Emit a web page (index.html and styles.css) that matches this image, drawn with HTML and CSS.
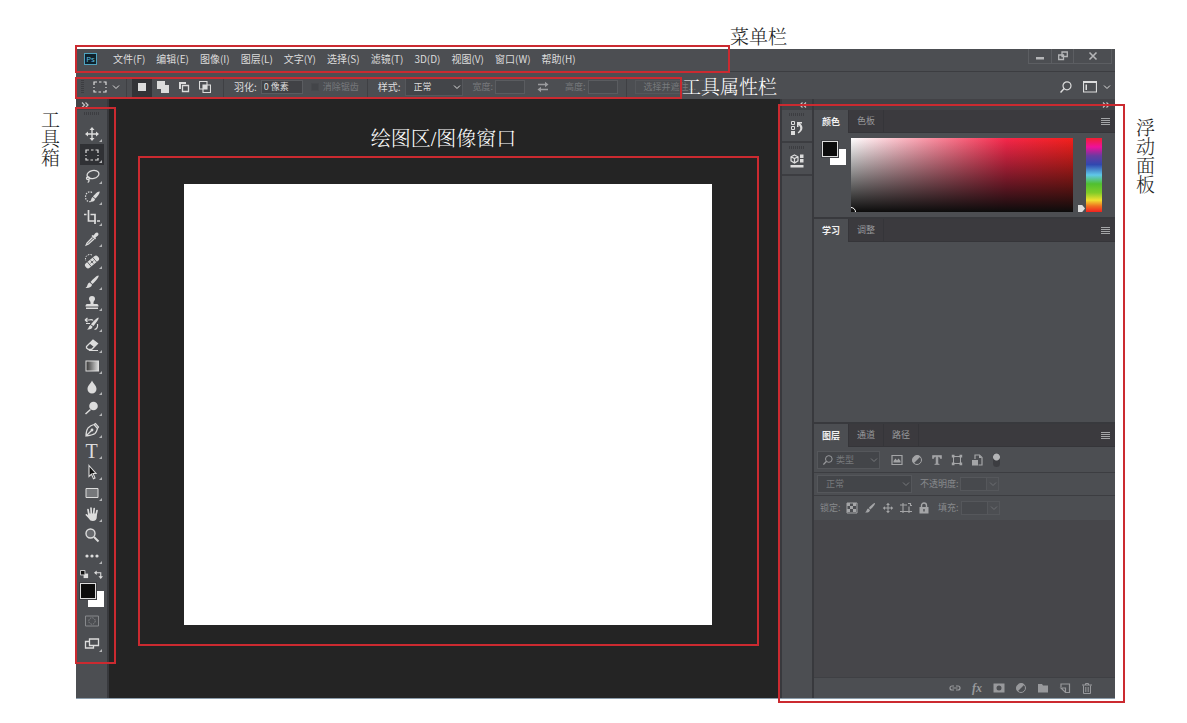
FILE: index.html
```html
<!DOCTYPE html>
<html lang="zh-CN">

<head>
  <meta charset="UTF-8">
  <meta name="viewport" content="width=device-width, initial-scale=1.0">
  <title>Photoshop 工作界面</title>
  <link rel="stylesheet" href="styles.css">
</head>

<body>
  <svg class="defs" aria-hidden="true">
    <symbol id="marquee" viewBox="0 0 16 16"><path d="M2 6V3h3M7 3h2.500M11.500 3H14v3M14 8v1M14 11v2h-3M9 13H6.500M4.500 13H2v-2M2 9V8" fill="none" stroke="currentColor" stroke-width="1.200" /></symbol>
    <symbol id="move" viewBox="0 0 16 16"><path d="M8 3v10M3 8h10" stroke="currentColor" stroke-width="1.400" /><path d="M8 1l2.500 3h-5zM8 15l2.500-3h-5zM1 8l3-2.500v5zM15 8l-3-2.500v5z" fill="currentColor" /></symbol>
    <symbol id="lasso" viewBox="0 0 16 16"><g fill="none" stroke="currentColor" stroke-width="1.300"><ellipse cx="9" cy="6.500" rx="6" ry="4" transform="rotate(-12 9 6.500)" /><path d="M4 9c-2 0-2 2.500 0 2.500S6 9 4 9M4.500 11.500c1 1 .5 2.500-.8 3" /></g></symbol>
    <symbol id="quick" viewBox="0 0 16 16"><path d="M8 3.500C5 1.500 1.500 4 1.500 8S5 13.500 7.500 12" fill="none" stroke="currentColor" stroke-width="1.200" stroke-dasharray="1.500 1.200" /><path d="M15.500 2.500c1 1-2 5-4 7L9 7.500c1.500-2 5-5.500 6.500-5zM8.500 8l2.500 2c0 2-2 3-5 2.500 1.500-1 1-3.500 2.500-4.500z" fill="currentColor" /></symbol>
    <symbol id="crop" viewBox="0 0 16 16"><path d="M4.500 0v11H12M0 4.500h2.500M6.500 4.500H11V14M13 11h3" fill="none" stroke="currentColor" stroke-width="1.700" /></symbol>
    <symbol id="dropper" viewBox="0 0 16 16"><path d="M9.500 4.500l2-2.500c2-1.500 4 .5 2.500 2.500l-2.500 2 .5 1-1 1L7.500 5l1-1z" fill="currentColor" /><path d="M8.500 6.500L3 12l-.8 2L4.500 13 10 8" fill="none" stroke="currentColor" stroke-width="1.300" /></symbol>
    <symbol id="heal" viewBox="0 0 16 16"><path d="M8 2C4 0 0 4 2 8" fill="none" stroke="currentColor" stroke-dasharray="1.500 1.200" /><g transform="rotate(-40 8 9)"><rect x="0" y="6" width="16" height="6" rx="2.500" fill="currentColor" /><path d="M4.500 6v6M11.500 6v6M6 9h4M8 7v4" stroke="#4c4e52" stroke-width=".8" /></g></symbol>
    <symbol id="brush" viewBox="0 0 16 16"><path d="M14.500 1.500c1 1-3 6-6 8.500L6.500 8C9 5 13.500 1 14.500 1.500zM5.500 8.500L8 10.500c0 2.500-3 4-6.500 3.500C4 12.500 3 9.500 5.500 8.500z" fill="currentColor" /></symbol>
    <symbol id="stamp" viewBox="0 0 16 16"><path d="M6.500 7.500C6.500 6 5 5.500 5 4a3 3 0 016 0c0 1.500-1.500 2-1.500 3.500V9H13c1 0 1.500 1 1.500 2.500h-13C1.500 10 2 9 3 9h3.500zM2 12.500h12V14H2z" fill="currentColor" /></symbol>
    <symbol id="history" viewBox="0 0 16 16"><path d="M14.500 1.500c1 1-3 6-5 8.500L7 8.500c2-3 6-7 7.500-7zM6.500 9l2 1.500c0 2-2.500 3.500-5.500 3 2-1 1.500-3.500 3.500-4.500z" fill="currentColor" /><path d="M1 4h4M1 4l2.500-2M1 4l2.500 2M5 4c3-1 4 .5 4 .5M2 7.500h4M13.500 8c.5 3-1 5-3 5.500" fill="none" stroke="currentColor" stroke-width="1.200" /></symbol>
    <symbol id="eraser" viewBox="0 0 16 16"><path d="M2.500 9.500L9 3l4.500 3.500L7.500 12.500H4.500L2.500 11z" fill="none" stroke="currentColor" stroke-width="1.300" /><path d="M5.500 6.500L9 3l4.500 3.500L10 10zM5 13h9v1H5z" fill="currentColor" /></symbol>
    <symbol id="gradient" viewBox="0 0 16 16"><linearGradient id="gr"><stop stop-color="#333" /><stop offset="1" stop-color="#ddd" /></linearGradient><rect x="2" y="3" width="12.500" height="10" fill="url(#gr)" stroke="currentColor" /></symbol>
    <symbol id="drop" viewBox="0 0 16 16"><path d="M8 1.500c1 3 4.500 5 4.500 8.500a4.500 4.500 0 01-9 0C3.500 6.500 7 4.500 8 1.500z" fill="currentColor" /></symbol>
    <symbol id="dodge" viewBox="0 0 16 16"><circle cx="9.500" cy="6" r="4.300" fill="currentColor" /><path d="M6.500 9.500L1.500 14" stroke="currentColor" stroke-width="1.500" /></symbol>
    <symbol id="pen" viewBox="0 0 16 16"><path d="M2 14c0-3 .5-6 2-8 2-2 4-3 6-3.500l3.500 4C13 8.500 12.500 10 11 11.500 9 13 5 13.500 2 14zM10 2.500l1.500-1 3 3.500-1 1.500M2 14l5.500-5.500" fill="none" stroke="currentColor" stroke-width="1.200" /><circle cx="8" cy="8" r="1.400" fill="currentColor" /></symbol>
    <symbol id="pointer" viewBox="0 0 16 16"><path d="M5 1.500l7 8H9l2 4.500-1.500.7-2-4.500L5 12.500z" fill="#111" stroke="currentColor" stroke-width="1.100" /></symbol>
    <symbol id="rect" viewBox="0 0 16 16"><path d="M2 3.500h12v9H2z" fill="#76787b" stroke="currentColor" /></symbol>
    <symbol id="hand" viewBox="0 0 16 16"><path d="M5 9L4 3.500M7.300 8L7 2M9.600 8l.6-5.500M12 9l1-4.500" stroke="currentColor" stroke-width="1.700" stroke-linecap="round" /><path d="M4.200 7.500h8.600V11c0 2.500-1.500 4-4 4-2 0-3-.8-4-2.500L1.500 9c0-1.500 1.500-1.500 2.700.5z" fill="currentColor" /></symbol>
    <symbol id="zoom" viewBox="0 0 16 16"><circle cx="6.500" cy="6.500" r="4.500" fill="#686a6e" stroke="currentColor" stroke-width="1.400" /><path d="M10 10l4.500 4.500" stroke="currentColor" stroke-width="2" /></symbol>
    <symbol id="more" viewBox="0 0 16 16"><circle cx="3" cy="8" r="1.600" fill="currentColor" /><circle cx="8" cy="8" r="1.600" fill="currentColor" /><circle cx="13" cy="8" r="1.600" fill="currentColor" /></symbol>
    <symbol id="mask" viewBox="0 0 16 16"><path d="M1.500 3h13v10h-13z" fill="none" stroke="currentColor" /><circle cx="8" cy="8" r="3.200" fill="none" stroke="currentColor" stroke-dasharray="1.500 1" /></symbol>
    <symbol id="screen" viewBox="0 0 16 16"><path d="M1.500 5.500h8v6.500h-8z" fill="none" stroke="currentColor" stroke-width="1.300" /><path d="M5.500 3h9v6.500h-9z" fill="#4c4e52" stroke="currentColor" stroke-width="1.300" /></symbol>
    <symbol id="minidefault" viewBox="0 0 10 10"><path d="M4 4h5v5H4z" fill="#ddd" /><path d="M.5 .5h5v5h-5z" fill="#111" stroke="#ddd" /></symbol>
    <symbol id="miniswap" viewBox="0 0 10 10"><path d="M2 3h5.500v5" fill="none" stroke="currentColor" stroke-width="1.200" /><path d="M0 3l3-2.500v5zM7.500 10L5 7h5z" fill="currentColor" /></symbol>
    <symbol id="typet" viewBox="0 0 16 16"><path d="M2 2h12v4h-1.500c-.2-1.500-.8-2.500-2.500-2.500H9.200v9c0 .7.600.9 1.800 1V14H5v-.5c1.200-.1 1.800-.3 1.800-1v-9H6C4.300 3.500 3.700 4.500 3.500 6H2z" fill="currentColor" stroke="currentColor" stroke-width=".8" /></symbol>
    <symbol id="selnew" viewBox="0 0 12 12"><path d="M2 2h8v8H2z" fill="currentColor" /></symbol>
    <symbol id="seladd" viewBox="0 0 12 12"><path d="M0 0h8v4h4v8H4V8H0z" fill="currentColor" /></symbol>
    <symbol id="selsub" viewBox="0 0 12 12"><path d="M1 1h7v2H3v5H1z" fill="currentColor" /><path d="M4.500 4.500h6v6h-6z" fill="none" stroke="currentColor" stroke-width="1.300" /></symbol>
    <symbol id="selint" viewBox="0 0 12 12"><path d="M.5 .5h7.500v7.500H.5zM4 4h7.500v7.500H4z" fill="none" stroke="currentColor" stroke-width="1.100" /><path d="M4 4h4v4H4z" fill="currentColor" /></symbol>
    <symbol id="chev" viewBox="0 0 8 8"><path d="M1 2.500l3 3 3-3" fill="none" stroke="currentColor" /></symbol>
    <symbol id="more-right" viewBox="0 0 8 6"><path d="M1 .5L3.500 3 1 5.500M4.500 .5L7 3 4.500 5.500" fill="none" stroke="currentColor" stroke-width="1.200" /></symbol>
    <symbol id="more-left" viewBox="0 0 8 6"><path d="M3.500 .5L1 3l2.500 2.500M7 .5L4.500 3 7 5.500" fill="none" stroke="currentColor" stroke-width="1.200" /></symbol>
    <symbol id="swap" viewBox="0 0 12 12"><path d="M1 3.500h8M11 8.500H3" stroke="currentColor" stroke-width="1.300" /><path d="M8 .8l3.500 2.700L8 6.200zM4 5.800L.5 8.500 4 11.200z" fill="currentColor" /></symbol>
    <symbol id="search" viewBox="0 0 12 12"><circle cx="7" cy="4.800" r="4" fill="none" stroke="currentColor" stroke-width="1.200" /><path d="M4.200 7.500L.5 11.500" stroke="currentColor" stroke-width="1.500" /></symbol>
    <symbol id="layout" viewBox="0 0 14 12"><path d="M.5 1h13v10H.5z" fill="none" stroke="currentColor" stroke-width="1.200" /><path d="M0 0h14v2H0zM2.500 3.500H4V9H2.500z" fill="currentColor" /></symbol>
    <symbol id="wmin" viewBox="0 0 10 10"><path d="M1 6h8v2.500H1z" fill="currentColor" /></symbol>
    <symbol id="wmax" viewBox="0 0 10 10"><path d="M4 1h5.300v4.500H4zM.7 4h4.800v4.500H.7z" fill="#4c4e52" stroke="currentColor" stroke-width="1.300" /></symbol>
    <symbol id="wclose" viewBox="0 0 10 10"><path d="M1.500 1.500l7 7M8.500 1.500l-7 7" stroke="currentColor" stroke-width="1.600" /></symbol>
    <symbol id="steps" viewBox="0 0 14 14"><path d="M1.500 .5h3v3h-3zM1.500 5.500h3v3h-3z" fill="none" stroke="currentColor" /><path d="M1 10h4v4H1zM7 1h5v1.500h-2C13.500 5 13.500 9.500 8.500 12.500l-.8-1.200C11 9 11 6 8.500 4v2H7z" fill="currentColor" /></symbol>
    <symbol id="props" viewBox="0 0 14 14"><path d="M4.500 1L8 2.800v4L4.500 9 1 6.800v-4zM1 2.800l3.500 1.700L8 2.800M4.500 4.500V9" fill="none" stroke="currentColor" stroke-width="1.200" /><path d="M10 .5h3.500V4H10zM10 5h3.500v3.500H10zM.5 11h13v2.500H.5z" fill="currentColor" /></symbol>
    <symbol id="image" viewBox="0 0 12 12"><path d="M1 1.500h10v9H1z" fill="none" stroke="currentColor" stroke-width="1.200" /><path d="M2.500 8.500V7L4.500 4.500 6 6.500l1.500-2 2 2.500v1.500z" fill="currentColor" /></symbol>
    <symbol id="adjust" viewBox="0 0 12 12"><circle cx="6" cy="6" r="4.500" fill="none" stroke="currentColor" /><path d="M2.500 9.500l7-7A5 5 0 002.500 9.500z" fill="currentColor" /></symbol>
    <symbol id="shape" viewBox="0 0 12 12"><path d="M2.500 2.500h7v7h-7z" fill="none" stroke="currentColor" /><path d="M.8 .8h2.700v2.700H.8zM8.500 .8h2.700v2.700H8.500zM.8 8.500h2.700v2.700H.8zM8.500 8.500h2.700v2.700H8.500z" fill="currentColor" /></symbol>
    <symbol id="smart" viewBox="0 0 12 12"><path d="M4 5V1h4.500L11 3.500V11H7.500" fill="none" stroke="currentColor" stroke-width="1.200" /><path d="M1 6h6v5.500H1zM8 1v3h3z" fill="currentColor" /></symbol>
    <symbol id="checker" viewBox="0 0 12 12"><path d="M1 1h10v10H1z" fill="none" stroke="currentColor" /><path d="M1 1h3v3H1zM7 1h3v3H7zM4 4h3v3H4zM1 7h3v3H1zM7 7h3v3H7z" fill="currentColor" /></symbol>
    <symbol id="artboard" viewBox="0 0 12 12"><path d="M3 1v10M9 4.500V11M0 3h7M0 9.500h12M10.500 1v2.500H12M8 1.500h3" fill="none" stroke="currentColor" stroke-width="1.100" /></symbol>
    <symbol id="lock" viewBox="0 0 12 12"><path d="M3.500 5.500v-2a2.500 2.500 0 015 0v2" fill="none" stroke="currentColor" stroke-width="1.400" /><path d="M1.500 5h9v6.500h-9zM5.300 7v2.500h1.400V7z" fill="currentColor" fill-rule="evenodd" /></symbol>
    <symbol id="link" viewBox="0 0 12 12"><path d="M5 4H3a2 2 0 000 4h2M7 4h2a2 2 0 010 4H7M3.500 6h5" fill="none" stroke="currentColor" stroke-width="1.200" /></symbol>
    <symbol id="addmask" viewBox="0 0 12 12"><path d="M.5 1.500h11v9H.5zM6 3.500a2.500 2.500 0 100 5 2.500 2.500 0 000-5z" fill="currentColor" fill-rule="evenodd" /></symbol>
    <symbol id="folder" viewBox="0 0 12 12"><path d="M1 2h4l1 1.500h5V10.500H1z" fill="currentColor" /></symbol>
    <symbol id="newlayer" viewBox="0 0 12 12"><path d="M2 5V2h8.500v8.500H6.500L2 6h4.500v4.500" fill="none" stroke="currentColor" stroke-width="1.200" /></symbol>
    <symbol id="trash" viewBox="0 0 12 12"><path d="M1 3h10M4.500 3V1.500h3V3M2.500 3.500v8h7v-8M4.800 5v5M7.200 5v5" fill="none" stroke="currentColor" /></symbol>
  </svg>

  <div class="page">
    <div class="caption caption-menu">菜单栏</div>
    <div class="caption caption-tools">工具箱</div>
    <div class="caption caption-panels">浮动面板</div>

    <div class="app">
      <header class="menubar">
        <span class="logo">Ps</span>
        <nav class="menu">
          <a href="#">文件(F)</a>
          <a href="#">编辑(E)</a>
          <a href="#">图像(I)</a>
          <a href="#">图层(L)</a>
          <a href="#">文字(Y)</a>
          <a href="#">选择(S)</a>
          <a href="#">滤镜(T)</a>
          <a href="#">3D(D)</a>
          <a href="#">视图(V)</a>
          <a href="#">窗口(W)</a>
          <a href="#">帮助(H)</a>
        </nav>
        <div class="window-btns">
          <button type="button" aria-label="最小化"><svg><use href="#wmin" /></svg></button>
          <button type="button" aria-label="还原"><svg><use href="#wmax" /></svg></button>
          <button type="button" aria-label="关闭" class="close"><svg><use href="#wclose" /></svg></button>
        </div>
        <span class="mark mark-menu"></span>
      </header>

      <div class="options">
        <span class="grip-v"></span>
        <button type="button" class="preset" aria-label="矩形选框"><svg class="i16"><use href="#marquee" /></svg><svg class="i8"><use href="#chev" /></svg></button>
        <div class="modes">
          <button type="button" class="active" aria-label="新选区"><svg class="i12"><use href="#selnew" /></svg></button>
          <button type="button" aria-label="添加到选区"><svg class="i12"><use href="#seladd" /></svg></button>
          <button type="button" aria-label="从选区减去"><svg class="i12"><use href="#selsub" /></svg></button>
          <button type="button" aria-label="与选区交叉"><svg class="i12"><use href="#selint" /></svg></button>
        </div>
        <div class="group">
          <label for="feather">羽化:</label>
          <input id="feather" class="field wide" value="0 像素">
          <input id="alias" type="checkbox" disabled>
          <label for="alias" class="dim">消除锯齿</label>
        </div>
        <div class="group">
          <label for="style">样式:</label>
          <span class="select style-select"><select id="style"><option>正常</option></select><svg class="i8"><use href="#chev" /></svg></span>
          <label for="width" class="dim">宽度:</label>
          <input id="width" class="field" disabled>
          <button type="button" class="swap" aria-label="互换"><svg class="i12"><use href="#swap" /></svg></button>
          <label for="height" class="dim">高度:</label>
          <input id="height" class="field" disabled>
        </div>
        <button type="button" class="refine" disabled>选择并遮住...</button>
        <div class="options-right">
          <button type="button" aria-label="搜索"><svg class="i12"><use href="#search" /></svg></button>
          <button type="button" class="workspace-btn" aria-label="工作区"><svg class="i14"><use href="#layout" /></svg><svg class="i8"><use href="#chev" /></svg></button>
        </div>
        <span class="mark mark-options"></span>
        <span class="caption caption-options">工具属性栏</span>
      </div>

      <div class="workspace">
        <aside class="toolbox">
          <div class="strip"><svg><use href="#more-right" /></svg></div>
          <span class="grip"></span>
          <div class="tools">
            <button type="button" aria-label="移动"><svg><use href="#move" /></svg></button>
            <button type="button" class="active" aria-label="矩形选框"><svg><use href="#marquee" /></svg></button>
            <button type="button" aria-label="套索"><svg><use href="#lasso" /></svg></button>
            <button type="button" aria-label="快速选择"><svg><use href="#quick" /></svg></button>
            <button type="button" aria-label="裁剪"><svg><use href="#crop" /></svg></button>
            <button type="button" aria-label="吸管"><svg><use href="#dropper" /></svg></button>
          </div>
          <div class="tools">
            <button type="button" aria-label="修复画笔"><svg><use href="#heal" /></svg></button>
            <button type="button" aria-label="画笔"><svg><use href="#brush" /></svg></button>
            <button type="button" aria-label="仿制图章"><svg><use href="#stamp" /></svg></button>
            <button type="button" aria-label="历史记录画笔"><svg><use href="#history" /></svg></button>
            <button type="button" aria-label="橡皮擦"><svg><use href="#eraser" /></svg></button>
            <button type="button" aria-label="渐变"><svg><use href="#gradient" /></svg></button>
            <button type="button" aria-label="模糊"><svg><use href="#drop" /></svg></button>
            <button type="button" aria-label="减淡"><svg><use href="#dodge" /></svg></button>
          </div>
          <div class="tools">
            <button type="button" aria-label="钢笔"><svg><use href="#pen" /></svg></button>
            <button type="button" aria-label="文字" class="type">T</button>
            <button type="button" aria-label="路径选择"><svg><use href="#pointer" /></svg></button>
            <button type="button" aria-label="矩形"><svg><use href="#rect" /></svg></button>
            <button type="button" aria-label="抓手"><svg><use href="#hand" /></svg></button>
            <button type="button" aria-label="缩放" class="single"><svg><use href="#zoom" /></svg></button>
            <button type="button" aria-label="编辑工具栏"><svg><use href="#more" /></svg></button>
          </div>
          <div class="minis">
            <button type="button" aria-label="默认颜色"><svg><use href="#minidefault" /></svg></button>
            <button type="button" aria-label="切换颜色"><svg><use href="#miniswap" /></svg></button>
          </div>
          <div class="swatches"><span class="fg"></span><span class="bg"></span></div>
          <div class="tools views">
            <button type="button" class="single dim" aria-label="快速蒙版"><svg><use href="#mask" /></svg></button>
            <button type="button" aria-label="屏幕模式"><svg><use href="#screen" /></svg></button>
          </div>
          <span class="mark mark-tools"></span>
        </aside>

        <main class="canvas">
          <div class="caption caption-canvas">绘图区/图像窗口</div>
          <div class="frame">
            <div class="document"></div>
          </div>
        </main>

        <aside class="dock">
          <div class="icons">
            <div class="strip"><svg><use href="#more-left" /></svg></div>
            <div class="icon-group"><span class="grip"></span><button type="button" aria-label="历史记录"><svg class="i14"><use href="#steps" /></svg></button></div>
            <div class="icon-group"><span class="grip"></span><button type="button" aria-label="属性"><svg class="i14"><use href="#props" /></svg></button></div>
          </div>
          <div class="panels">
            <div class="strip"><svg><use href="#more-right" /></svg></div>

            <section class="panel">
              <div class="tabs">
                <button type="button" class="active">颜色</button>
                <button type="button">色板</button>
                <button type="button" class="panel-menu" aria-label="面板菜单"></button>
              </div>
              <div class="color">
                <div class="swatches"><span class="fg"></span><span class="bg"></span></div>
                <div class="field-sv"><span class="picker"></span></div>
                <input class="hue" type="range" min="0" max="100" value="100" aria-label="色相">
              </div>
            </section>

            <section class="panel learn">
              <div class="tabs">
                <button type="button" class="active">学习</button>
                <button type="button">调整</button>
                <button type="button" class="panel-menu" aria-label="面板菜单"></button>
              </div>
            </section>

            <section class="panel layers">
              <div class="tabs">
                <button type="button" class="active">图层</button>
                <button type="button">通道</button>
                <button type="button">路径</button>
                <button type="button" class="panel-menu" aria-label="面板菜单"></button>
              </div>
              <div class="row filter">
                <span class="select kind"><svg class="i10 kind-icon"><use href="#search" /></svg><select aria-label="滤镜类型"><option>类型</option></select><svg class="i8"><use href="#chev" /></svg></span>
                <div class="icon-row">
                  <button type="button" aria-label="像素图层"><svg class="i12"><use href="#image" /></svg></button>
                  <button type="button" aria-label="调整图层"><svg class="i12"><use href="#adjust" /></svg></button>
                  <button type="button" aria-label="文字图层"><svg class="i12"><use href="#typet" /></svg></button>
                  <button type="button" aria-label="形状图层"><svg class="i12"><use href="#shape" /></svg></button>
                  <button type="button" aria-label="智能对象"><svg class="i12"><use href="#smart" /></svg></button>
                </div>
                <button type="button" class="toggle" aria-label="图层过滤"></button>
              </div>
              <div class="row">
                <span class="select blend"><select aria-label="混合模式"><option>正常</option></select><svg class="i8"><use href="#chev" /></svg></span>
                <label for="opacity">不透明度:</label>
                <span class="combo"><input id="opacity" class="field" disabled><button type="button" aria-label="不透明度滑块"><svg class="i8"><use href="#chev" /></svg></button></span>
              </div>
              <div class="row lock">
                <span class="lock-label">锁定:</span>
                <div class="icon-row">
                  <button type="button" aria-label="锁定透明像素"><svg class="i12"><use href="#checker" /></svg></button>
                  <button type="button" aria-label="锁定图像像素"><svg class="i12"><use href="#brush" /></svg></button>
                  <button type="button" aria-label="锁定位置"><svg class="i12"><use href="#move" /></svg></button>
                  <button type="button" aria-label="锁定画板"><svg class="i12"><use href="#artboard" /></svg></button>
                  <button type="button" aria-label="锁定全部"><svg class="i12"><use href="#lock" /></svg></button>
                </div>
                <label for="fill">填充:</label>
                <span class="combo"><input id="fill" class="field" disabled><button type="button" aria-label="填充滑块"><svg class="i8"><use href="#chev" /></svg></button></span>
              </div>
              <div class="list"></div>
              <div class="footer">
                <button type="button" aria-label="链接图层"><svg class="i12"><use href="#link" /></svg></button>
                <button type="button" class="fx">fx</button>
                <button type="button" aria-label="添加蒙版"><svg class="i12"><use href="#addmask" /></svg></button>
                <button type="button" aria-label="新建调整图层"><svg class="i12"><use href="#adjust" /></svg></button>
                <button type="button" aria-label="新建组"><svg class="i12"><use href="#folder" /></svg></button>
                <button type="button" aria-label="新建图层"><svg class="i12"><use href="#newlayer" /></svg></button>
                <button type="button" aria-label="删除图层"><svg class="i12"><use href="#trash" /></svg></button>
              </div>
            </section>
          </div>
          <span class="mark mark-dock"></span>
        </aside>
      </div>
    </div>
  </div>
</body>

</html>
```
FILE: styles.css
```css
* {
  box-sizing: border-box;
}

body {
  margin: 0;
  background: #fff;
  color: #dcdcdc;
  font-family: "Noto Sans CJK SC", sans-serif;
  font-size: 10px;
  line-height: 14px;
}

button,
input,
select {
  margin: 0;
  padding: 0;
  border: 0;
  background: none;
  color: inherit;
  font: inherit;
}

a {
  color: inherit;
  text-decoration: none;
}

svg {
  display: block;
  flex: none;
}

.defs {
  position: absolute;
  width: 0;
  height: 0;
}

.i8 { width: 8px; height: 8px; }
.i10 { width: 10px; height: 10px; }
.i12 { width: 12px; height: 12px; }
.i14 { width: 14px; height: 14px; }
.i16 { width: 16px; height: 16px; }

.page {
  position: relative;
  display: flex;
  min-height: 100vh;
  padding: 49px 72px 24px 76px;
}

.app {
  flex: 1;
  min-width: 0;
  display: flex;
  flex-direction: column;
  background: #4c4e52;
  border-bottom: 1px solid #8b9cab;
}

/* red boxes and captions */
.mark {
  position: absolute;
  z-index: 2;
  border: 2px solid #cb2a30;
  pointer-events: none;
}

.mark-menu { top: -4px; left: -1px; width: 655px; bottom: -2px; }
.mark-options { top: 5px; left: -1px; width: 607px; bottom: 0; }
.mark-tools { top: 8px; left: -1px; right: -9px; bottom: 34px; }
.mark-dock { top: 5px; left: -2px; right: -10px; bottom: -5px; }

.caption {
  font-family: "Liberation Serif", "Noto Serif CJK SC", "Noto Sans CJK SC", serif;
  font-size: 19px;
  font-weight: 300;
  line-height: 24px;
  white-space: nowrap;
}

.caption-menu,
.caption-tools,
.caption-panels {
  position: absolute;
  color: #222;
}

.caption-menu { top: 26px; left: 730px; }
.caption-tools { top: 110px; left: 36px; writing-mode: vertical-rl; }
.caption-panels { top: 118px; right: 32px; writing-mode: vertical-rl; }

.caption-options {
  position: absolute;
  z-index: 2;
  top: 4px;
  left: 606px;
  color: #fff;
}

/* menu bar */
.menubar {
  position: relative;
  display: flex;
  height: 23px;
  padding-left: 8px;
  border-bottom: 1px solid #3c3d41;
}

.logo {
  width: 13px;
  height: 12px;
  margin-top: 4px;
  border: 1px solid #4fa3c0;
  background: #0f222c;
  color: #5fc0e0;
  font: 8px/10px "Open Sans", sans-serif;
  text-align: center;
}

.menu {
  display: flex;
  gap: 11px;
  margin: 3px auto 0 16px;
  white-space: nowrap;
}

.window-btns {
  display: flex;
  height: 15px;
  margin-right: 3px;
  border: 1px solid #5c5e62;
  border-top: 0;
}

.window-btns button {
  display: flex;
  width: 22px;
  align-items: center;
  justify-content: center;
  border-left: 1px solid #5c5e62;
  color: #b5b6b8;
}

.window-btns button:first-child { border-left: 0; }
.window-btns .close { width: 38px; }
.window-btns svg { width: 10px; height: 10px; }

/* options bar */
.options {
  position: relative;
  display: flex;
  align-items: center;
  height: 27px;
  padding: 2px 4px 0 5px;
  white-space: nowrap;
}

.grip-v {
  width: 3px;
  height: 14px;
  background: repeating-linear-gradient(#3c3d41 0 1px, transparent 1px 2px);
}

.preset,
.modes,
.group {
  display: flex;
  align-items: center;
  height: 20px;
}

.preset { gap: 4px; padding: 0 6px 0 8px; border-right: 1px solid #3f4044; }

.modes { gap: 1px; padding: 0 8px 0 5px; border-right: 1px solid #3f4044; }

.modes button {
  display: flex;
  width: 20px;
  height: 20px;
  align-items: center;
  justify-content: center;
}

.modes .active { background: #323337; }

.group { padding: 0 8px 0 10px; border-right: 1px solid #3f4044; }

.field {
  width: 30px;
  height: 14px;
  padding: 0 2px;
  border: 1px solid #5a5c60;
  background: #47494d;
  line-height: 12px;
}

.group label { margin-right: 4px; }
.group .dim { margin-left: 4px; margin-right: 0; color: #77797c; font-size: 9px; }
.group .wide { width: 42px; background: #414246; font-size: 9px; }
.group .swap { margin: 0 12px; color: #9a9b9e; }
.group .dim + .field { margin-left: 2px; }
.group .style-select { margin-right: 6px; }

input[type="checkbox"] {
  appearance: none;
  width: 8px;
  height: 8px;
  margin-left: 8px;
  border: 1px solid #47494d;
  background: #434549;
}

.select {
  position: relative;
  display: flex;
  align-items: center;
}

.select select {
  appearance: none;
  width: 100%;
  height: 18px;
  padding: 0 16px 0 8px;
  border: 1px solid #55575b;
  background: #434549;
  font-size: 9px;
}

.select > svg:last-child {
  position: absolute;
  right: 2px;
}

.style-select { width: 58px; }

.refine {
  height: 14px;
  margin-left: 8px;
  padding: 0 8px;
  border: 1px solid #55575b;
  color: #77797c;
  font-size: 9px;
  line-height: 12px;
}

.options-right {
  display: flex;
  align-items: center;
  gap: 11px;
  margin-left: auto;
}

.workspace-btn {
  display: flex;
  align-items: center;
  gap: 6px;
}

/* workspace */
.workspace {
  flex: 1;
  display: flex;
}

.strip {
  display: flex;
  height: 11px;
  padding: 3px 5px 0;
  background: #424246;
  color: #c4c4c4;
}

.strip svg { width: 8px; height: 6px; }

.grip {
  display: block;
  width: 16px;
  height: 3px;
  margin: 2px auto 0;
  background: repeating-linear-gradient(90deg, #3c3d41 0 1px, transparent 1px 2px);
}

.toolbox {
  position: relative;
  width: 33px;
  border-right: 2px solid #38393d;
  padding-bottom: 40px;
}

.toolbox > .grip { margin-bottom: 8px; }

.tools {
  display: flex;
  flex-direction: column;
  align-items: center;
  margin-bottom: 1px;
}

.tools button {
  position: relative;
  display: flex;
  width: 24px;
  height: 21px;
  align-items: center;
  justify-content: center;
}

.tools svg { width: 16px; height: 16px; }
.tools .active { background: #303135; }
.tools .dim { color: #87898c; }
.tools .type { font: 20px/20px "Liberation Serif", serif; }

.tools button::after {
  content: "";
  position: absolute;
  right: 2px;
  bottom: 2px;
  border-left: 3px solid transparent;
  border-bottom: 3px solid #b4b5b7;
}

.tools .single::after { display: none; }

.minis {
  display: flex;
  justify-content: space-between;
  padding: 3px 4px 0;
}

.minis svg { width: 9px; height: 9px; }

.swatches {
  position: relative;
  width: 24px;
  height: 24px;
}

.fg,
.bg {
  position: absolute;
  width: 16px;
  height: 16px;
}

.fg {
  z-index: 1;
  top: 0;
  left: 0;
  border: 1px solid #ddd;
  background: #0c0c0c;
  outline: 1px solid #3c3d41;
}

.bg {
  right: 0;
  bottom: 0;
  background: #fff;
}

.toolbox .swatches { margin: 4px 4px 3px; }
.toolbox .views { gap: 2px; }

.canvas {
  flex: 1;
  min-width: 0;
  display: flex;
  flex-direction: column;
  padding: 28px 21px 52px 29px;
  background: #242424;
}

.caption-canvas {
  padding: 0 10px 5px 0;
  color: #fff;
  font-size: 20px;
  text-align: center;
}

.frame {
  flex: 1;
  display: flex;
  padding: 26px 45px 19px 44px;
  border: 2px solid #cb2a30;
}

.document {
  flex: 1;
  background: #fff;
}

/* right dock */
.dock {
  position: relative;
  display: flex;
  width: 335px;
}

.icons {
  width: 34px;
  border-left: 2px solid #38393d;
  border-right: 2px solid #38393d;
}

.dock .strip { justify-content: flex-end; }

.icon-group {
  height: 33px;
  padding-top: 1px;
  border-bottom: 2px solid #3c3d41;
}

.icon-group button {
  display: block;
  margin: 5px auto 0;
}

.panels {
  flex: 1;
  display: flex;
  flex-direction: column;
  gap: 2px;
  background: #38393d;
}

.panels > .strip { margin-bottom: -2px; }

.panel { background: #4c4e52; }
.learn { height: 203px; }

.layers {
  flex: 1;
  display: flex;
  flex-direction: column;
  color: #87898c;
}

.tabs {
  display: flex;
  height: 23px;
  background: #3b3a3e;
  border-bottom: 1px solid #353539;
}

.tabs button {
  width: 35px;
  border-right: 1px solid #353539;
  color: #98999c;
  font-size: 9px;
}

.tabs .active {
  height: 23px;
  background: #4c4e52;
  color: #f0f0f0;
  font-weight: bold;
}

.tabs .panel-menu {
  width: 9px;
  height: 7px;
  margin: 8px 5px 0 auto;
  border: 0;
  background: repeating-linear-gradient(#a4a5a7 0 1px, transparent 1px 2px);
}

.color {
  display: flex;
  height: 84px;
  padding: 5px 13px 5px 8px;
}

.color .swatches { margin: 3px 5px 0 0; }

.field-sv {
  position: relative;
  flex: 1;
  overflow: hidden;
  background: linear-gradient(transparent, #0c0c0c), linear-gradient(90deg, #fff, #f7274a 70%, #f4201c);
}

.picker {
  position: absolute;
  left: -5px;
  bottom: -5px;
  width: 10px;
  height: 10px;
  border: 1px solid #fff;
  border-radius: 50%;
}

.hue {
  appearance: none;
  writing-mode: vertical-lr;
  width: 24px;
  height: 74px;
  margin-left: 5px;
  background: linear-gradient(#f02030, #f0109a 12%, #6a3aa0 24%, #3048b0 36%, #60c8e8 50%, #50c030 62%, #80cc28 74%, #f0e030 84%, #f07020 92%, #f02020) right / 16px 100% no-repeat;
}

.hue::-webkit-slider-thumb {
  appearance: none;
  width: 7px;
  height: 7px;
  margin-right: 17px;
  background: #ddd;
  clip-path: polygon(0 0, 60% 0, 100% 50%, 60% 100%, 0 100%);
}

.row {
  display: flex;
  align-items: center;
  height: 23px;
  padding-left: 3px;
  border-bottom: 1px solid #3c3d41;
}

.row label { width: 40px; margin-left: 8px; font-size: 9px; }
.filter { height: 26px; }
.lock { height: 24px; border: 0; }
.lock-label { width: 26px; padding-left: 3px; font-size: 9px; }
.lock label { width: 23px; }

.kind { width: 63px; margin-right: 11px; }
.kind-icon { position: absolute; left: 6px; }
.kind select { padding-left: 18px; }
.blend { width: 95px; }
.layers .select { color: #77797c; }
.layers .kind-icon { color: #98999c; }

.icon-row {
  display: flex;
  gap: 8px;
  color: #a4a5a7;
}

.lock .icon-row { gap: 6px; padding-left: 3px; }

.toggle {
  width: 7px;
  height: 14px;
  margin-left: 10px;
  border-radius: 4px;
  background: radial-gradient(circle at 50% 4px, #b4b5b7 3px, #3c3d41 4px);
}

.combo {
  display: flex;
  width: 39px;
  height: 14px;
  border: 1px solid #55575b;
  color: #6c6e72;
}

.combo .field {
  width: 26px;
  height: 12px;
  border: 0;
  border-right: 1px solid #55575b;
}

.combo button { padding: 2px; }

.list {
  flex: 1;
  background: #46464a;
  border-bottom: 1px solid #3f4044;
}

.footer {
  display: flex;
  align-items: center;
  justify-content: flex-end;
  gap: 10px;
  height: 20px;
  padding-right: 22px;
  color: #98999c;
}

.fx {
  width: 12px;
  font: italic bold 12px/12px "Liberation Serif", serif;
}
```
